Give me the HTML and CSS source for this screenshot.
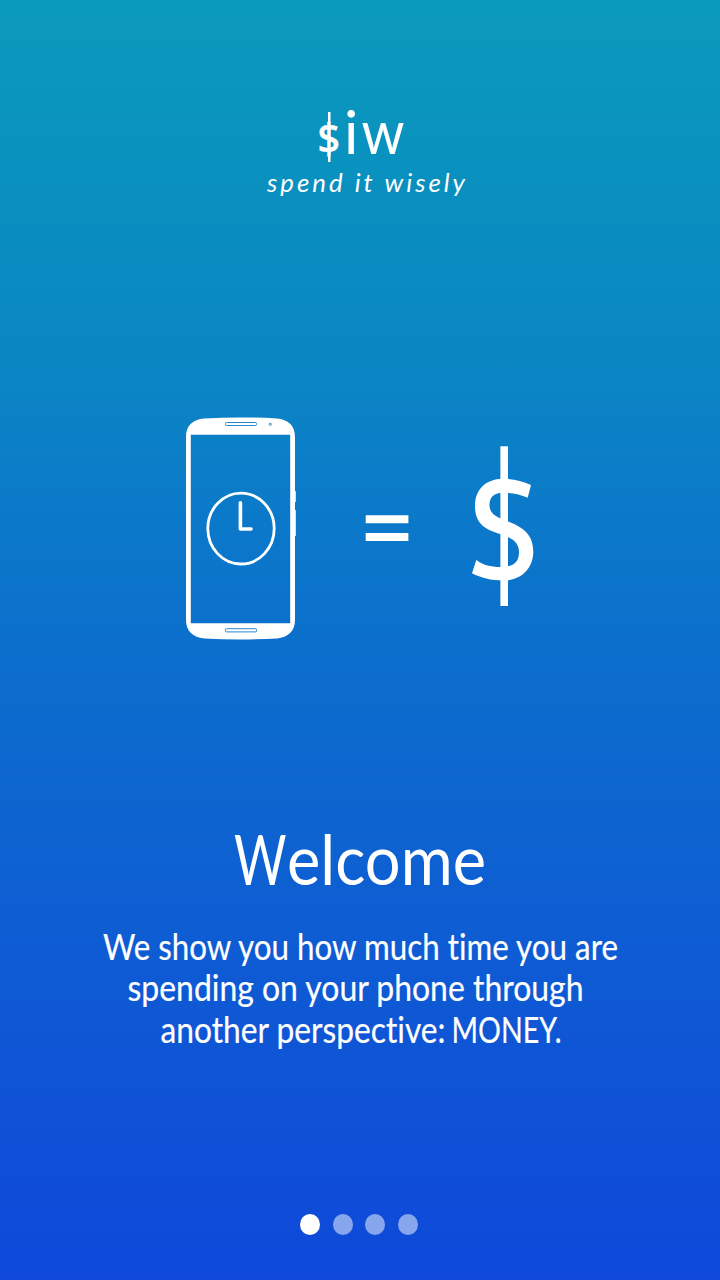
FILE: index.html
```html
<!DOCTYPE html>
<html lang="en">
<head>
<meta charset="utf-8">
<title>$iw - spend it wisely</title>
<link rel="stylesheet" href="styles.css">
</head>
<body>
<main class="screen">
  <header class="brand">
    <svg class="art" viewBox="0 0 720 210">
      <text class="brand-sign" x="317.500" y="154" textLength="22.500" lengthAdjust="spacingAndGlyphs">$</text>
      <rect x="328" y="112" width="2.500" height="50"/>
      <text class="brand-name" y="154"><tspan x="344">i</tspan><tspan x="361.500" textLength="43" lengthAdjust="spacingAndGlyphs">w</tspan></text>
      <text class="tagline" x="267" y="192" textLength="201" lengthAdjust="spacingAndGlyphs">spend it wisely</text>
    </svg>
  </header>
  <section class="hero">
    <svg class="art" viewBox="0 400 720 260">
      <path fill-rule="evenodd" d="M186 437C186 425 193 419.500 204 418.500Q240 416.300 277 418.500C288 419.500 295 425 295 437V620C295 631 288 637.500 277 638.500Q240 640.500 204 638.500C193 637.500 186 631 186 620ZM190.800 434.700V623.200H290.200V434.700Z"/>
      <path d="M294.500 491h1.300v11h-1.300zM294.500 510h1.300v26h-1.300z"/>
      <rect class="detail" x="225.500" y="422.500" width="31" height="3" rx="1"/>
      <circle class="detail" cx="270.300" cy="424.300" r="1.100"/>
      <rect class="detail" x="225.500" y="628.700" width="31" height="3.200" rx="1"/>
      <ellipse class="clock" cx="241" cy="528.600" rx="33.200" ry="35.400"/>
      <path class="hand" d="M240.400 502.700V529H251"/>
      <path d="M365.700 515.300h42.700v8h-42.700zM365.700 533h42.700v8h-42.700z"/>
      <rect x="500.400" y="446.300" width="7.600" height="159.700"/>
      <path d="M531 485C522 481 513 478.700 503 478.700C485 479 475 490 475 506C475 522 483 529 500 534C513 538 519 543 519 552C519 562 514 567 500 567C491 567 483 565 476.300 560L472 573.300C481 578 491 580.500 503 580.500C522 580.500 533 568 533.300 552C533.300 537 526 528 508 521.500C495 517 489.500 513 489.500 505C489.500 497 494 493 502 492.700C511 492.700 520 494 527.700 497.700Z"/>
    </svg>
  </section>
  <section class="message">
    <svg class="art" viewBox="0 810 720 250">
      <text class="title" x="234" y="884.500" textLength="52.500" lengthAdjust="spacingAndGlyphs">W</text>
      <text class="title" x="287" y="884.500" textLength="199" lengthAdjust="spacingAndGlyphs">elcome</text>
      <text class="copy" x="103" y="959.700" textLength="515" lengthAdjust="spacingAndGlyphs">We show you how much time you are</text>
      <text class="copy" x="127.500" y="1001.300" textLength="456" lengthAdjust="spacingAndGlyphs">spending on your phone through</text>
      <text class="copy" x="160.500" y="1043" textLength="285" lengthAdjust="spacingAndGlyphs">another perspective:</text>
      <text class="copy" x="451.500" y="1043" textLength="110" lengthAdjust="spacingAndGlyphs">MONEY.</text>
    </svg>
  </section>
  <nav class="pager">
    <span class="dot dot-active"></span>
    <span class="dot"></span>
    <span class="dot"></span>
    <span class="dot"></span>
  </nav>
</main>
</body>
</html>
```
FILE: styles.css
```css
body {
  margin: 0;
}

.screen {
  display: flex;
  flex-direction: column;
  box-sizing: border-box;
  width: 720px;
  height: 1280px;
  overflow: hidden;
  background: linear-gradient(#0a9abc 0, #0991bf 170px, #0b85c4 380px, #0b78ca 530px, #0c6bcd 700px, #0e5dd3 930px, #0f50d7 1130px, #0e49da 1280px);
  font-family: Lato, "Noto Sans", sans-serif;
  font-variant-ligatures: none;
}

.art {
  display: block;
  width: 100%;
  fill: #fff;
}

.hero {
  margin-top: 190px;
}

.message {
  margin-top: 150px;
}

.brand-sign {
  font-family: "Noto Sans", sans-serif;
  font-size: 41px;
  font-weight: 500;
  stroke: #fff;
  stroke-width: 0.5px;
}

.brand-name {
  font-size: 60px;
}

.tagline {
  font-size: 26px;
  font-style: italic;
  letter-spacing: 3px;
}

.title {
  font-size: 69.5px;
}

.copy {
  font-size: 36.5px;
  stroke: #fff;
  stroke-width: 0.2px;
}

.detail {
  fill: none;
  stroke: #258acb;
  stroke-width: 1px;
}

.clock {
  fill: none;
  stroke: #fff;
  stroke-width: 2.8px;
}

.hand {
  fill: none;
  stroke: #fff;
  stroke-width: 3.6px;
  stroke-linecap: round;
  stroke-linejoin: round;
}

.pager {
  display: flex;
  justify-content: center;
  gap: 12.2px;
  margin-top: 154px;
  padding-right: 2px;
}

.dot {
  width: 20.3px;
  height: 21.3px;
  border-radius: 50%;
  background: rgba(255, 255, 255, 0.5);
}

.dot-active {
  background: #fff;
}
```
